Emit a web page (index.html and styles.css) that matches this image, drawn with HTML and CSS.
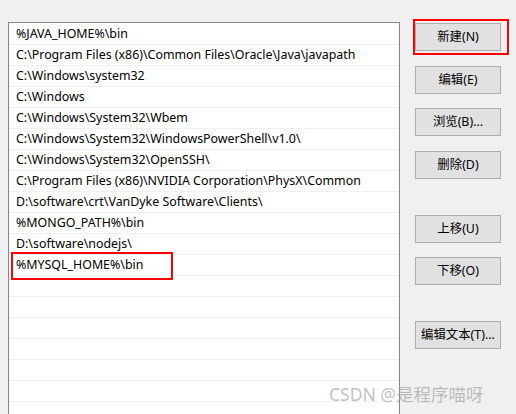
FILE: index.html
```html
<!DOCTYPE html>
<html>
<head>
<meta charset="utf-8">
<link rel="stylesheet" href="styles.css">
</head>
<body>
<div class="dialog">
  <div class="listbox">
    <ul class="paths">
      <li class="row">%JAVA_HOME%\bin</li>
      <li class="row">C:\Program Files (x86)\Common Files\Oracle\Java\javapath</li>
      <li class="row">C:\Windows\system32</li>
      <li class="row">C:\Windows</li>
      <li class="row">C:\Windows\System32\Wbem</li>
      <li class="row">C:\Windows\System32\WindowsPowerShell\v1.0\</li>
      <li class="row">C:\Windows\System32\OpenSSH\</li>
      <li class="row">C:\Program Files (x86)\NVIDIA Corporation\PhysX\Common</li>
      <li class="row">D:\software\crt\VanDyke Software\Clients\</li>
      <li class="row">%MONGO_PATH%\bin</li>
      <li class="row">D:\software\nodejs\</li>
      <li class="row marked">%MYSQL_HOME%\bin<span class="mark mark-row"></span></li>
      <li class="row"></li>
      <li class="row"></li>
      <li class="row"></li>
      <li class="row"></li>
      <li class="row"></li>
      <li class="row"></li>
      <li class="row"></li>
    </ul>
  </div>
  <div class="actions">
    <button class="btn btn-new">新建(N)<span class="mark mark-btn"></span></button>
    <button class="btn btn-edit">编辑(E)</button>
    <button class="btn btn-browse">浏览(B)...</button>
    <button class="btn btn-delete">删除(D)</button>
    <button class="btn btn-up">上移(U)</button>
    <button class="btn btn-down">下移(O)</button>
    <button class="btn btn-text">编辑文本(T)...</button>
  </div>
  <div class="watermark">CSDN @是程序喵呀</div>
</div>
</body>
</html>
```

FILE: styles.css
```css
html, body {
  margin: 0;
  padding: 0;
  background: #f0f0f0;
}

.dialog {
  position: relative;
  width: 516px;
  height: 414px;
  overflow: hidden;
  display: flex;
  align-items: flex-start;
  font-family: "Noto Sans", "Noto Sans CJK SC", sans-serif;
  font-size: 12.4px;
  color: #000;
}

.listbox {
  box-sizing: border-box;
  margin-left: 8px;
  margin-top: 22px;
  width: 392px;
  height: 420px;
  background: #fff;
  border: 1px solid #828790;
  border-bottom: none;
  padding-top: 1px;
}

.paths {
  list-style: none;
  margin: 0;
  padding: 0;
}

.row {
  position: relative;
  box-sizing: border-box;
  height: 21px;
  line-height: 20px;
  padding-left: 7px;
  border-bottom: 1px solid #f0f0f0;
  white-space: nowrap;
}

.mark {
  position: absolute;
  box-sizing: border-box;
  border: 2px solid #ff0000;
  pointer-events: none;
}

.mark-row {
  left: 2px;
  top: -3px;
  width: 162px;
  height: 28px;
}

.actions {
  display: flex;
  flex-direction: column;
  margin-left: 15px;
  margin-top: 23px;
}

.btn {
  position: relative;
  box-sizing: border-box;
  width: 86px;
  height: 28px;
  padding: 0;
  margin: 0;
  background: #e1e1e1;
  border: 1px solid #adadad;
  font-family: "Noto Sans", "Noto Sans CJK SC", sans-serif;
  font-size: 12.4px;
  color: #000;
  line-height: 26px;
  text-align: center;
}

.btn-edit { margin-top: 15px; }
.btn-browse { margin-top: 14px; }
.btn-delete { margin-top: 15px; }
.btn-up { margin-top: 36px; }
.btn-down { margin-top: 14px; }
.btn-text { margin-top: 36px; }

.mark-btn {
  left: -3px;
  top: -5px;
  width: 96px;
  height: 36px;
}

.watermark {
  position: absolute;
  left: 329px;
  top: 381px;
  font-family: "Noto Sans", "Noto Sans CJK SC", sans-serif;
  font-size: 17.5px;
  color: rgba(150, 150, 150, 0.6);
  white-space: nowrap;
  line-height: 26px;
}
```
